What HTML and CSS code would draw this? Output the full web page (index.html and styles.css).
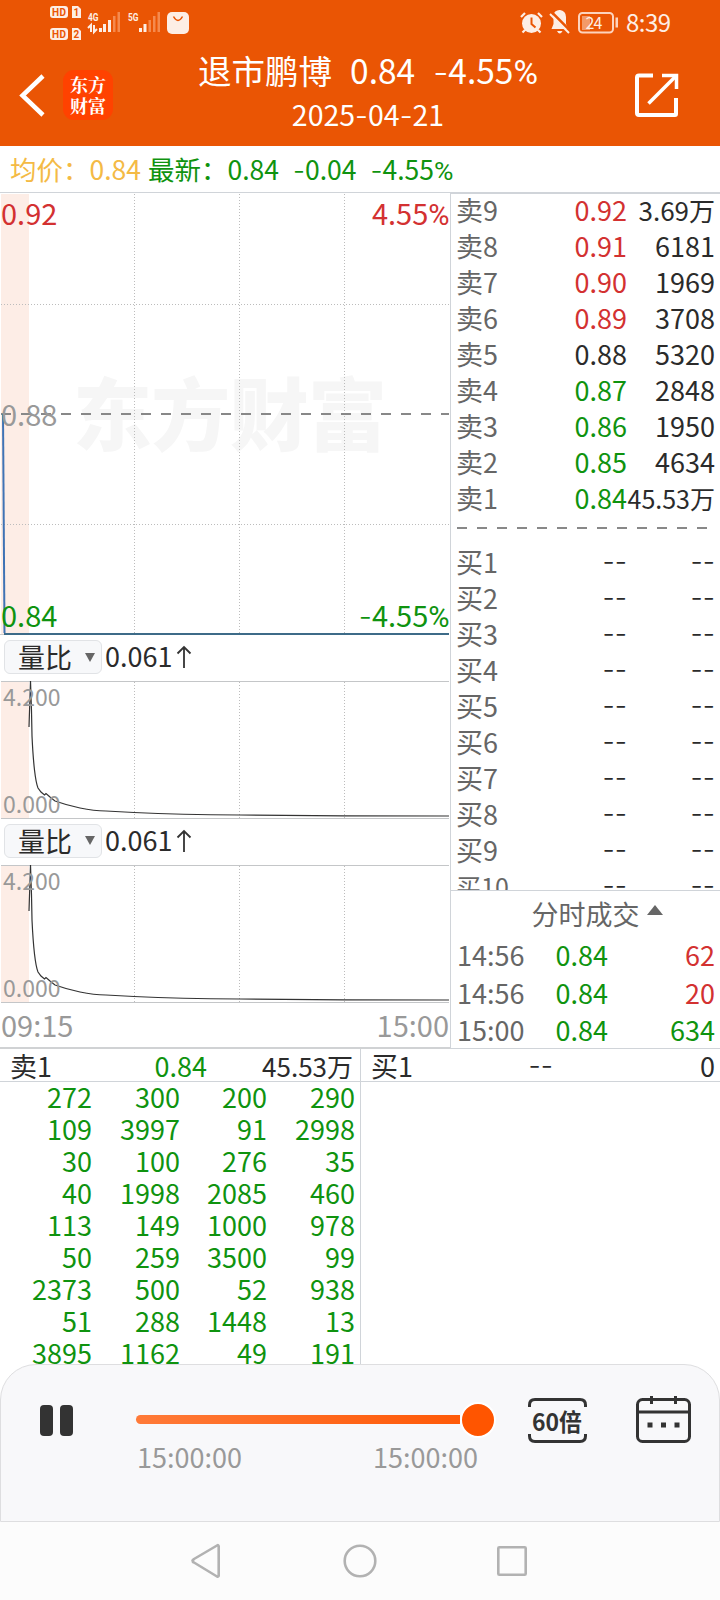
FILE: index.html
```
<!DOCTYPE html>
<html lang="zh-CN">
<head>
    <meta charset="UTF-8">
    <meta name="viewport" content="width=device-width, initial-scale=1.0">
    <title>退市鹏博 分时回放</title>
    <link rel="stylesheet" href="styles.css">
</head>
<body>

<header class="header">
    <div class="status">
        <svg class="status-left" width="150" height="44" viewBox="46 0 150 44">
            <g fill="#fdeee5">
                <rect x="50" y="6" width="18" height="12" rx="3"/>
                <path d="M72 6h6l3 3v9h-9z"/>
                <rect x="50" y="28" width="18" height="12" rx="3"/>
                <path d="M72 28h6l3 3v9h-9z"/>
                <rect x="99" y="28" width="3" height="4"/>
                <rect x="103" y="24" width="3" height="8"/>
                <rect x="108" y="20" width="3" height="12"/>
                <rect x="139" y="28" width="3" height="4"/>
                <rect x="143.500" y="24" width="3" height="8"/>
                <rect x="167" y="12" width="22" height="22" rx="5"/>
            </g>
            <g fill="#f58a4e">
                <rect x="113" y="16" width="2.500" height="16"/>
                <rect x="117.500" y="12" width="2.500" height="20"/>
                <rect x="148.500" y="20" width="2.500" height="12"/>
                <rect x="153" y="16" width="2.500" height="16"/>
                <rect x="157.500" y="12" width="2.500" height="20"/>
            </g>
            <path d="M88 28l3-3v7M94 25v7l3-3" fill="none" stroke="#fdeee5" stroke-width="2"/>
            <path d="M173.500 16.500q4.500 8 9 0" fill="none" stroke="#ea5504" stroke-width="1.500"/>
            <g class="hd" fill="#ea5504">
                <text x="52" y="16" textLength="14">HD</text>
                <text x="73.500" y="16">1</text>
                <text x="52" y="38" textLength="14">HD</text>
                <text x="73.500" y="38">2</text>
            </g>
            <g class="net" fill="#fdeee5">
                <text x="88" y="20.500" textLength="10.500" lengthAdjust="spacingAndGlyphs">4G</text>
                <text x="128" y="20.500" textLength="10.500" lengthAdjust="spacingAndGlyphs">5G</text>
            </g>
        </svg>
        <svg class="status-right" width="160" height="44" viewBox="516 0 160 44">
            <g fill="#fdeee5">
                <circle cx="531.500" cy="23.500" r="9.500"/>
                <path d="M521 17l4-4M538 13l4 4M525 30l-2.500 2.500M538 30l2.500 2.500" stroke="#fdeee5" stroke-width="2.200"/>
                <path d="M553 16a6.500 6.500 0 0 1 13 1v7l2.500 5h-17l2-5v-7z"/>
                <rect x="557" y="12.500" width="5" height="4" rx="2"/>
                <path d="M557 31h5.500q-2.700 5-5.500 0z"/>
            </g>
            <path d="M531.500 17.500v6.500l4 3.500" fill="none" stroke="#ea5504" stroke-width="2"/>
            <path d="M551.500 12l18 18" stroke="#ea5504" stroke-width="2.500"/>
            <path d="M550 14l19 19" stroke="#fdeee5" stroke-width="2"/>
            <rect x="579" y="13" width="34" height="19.500" rx="3.500" fill="none" stroke="#fdd3bd" stroke-width="2"/>
            <rect x="582" y="16" width="8" height="14" fill="#f39a69"/>
            <rect x="615.500" y="17.500" width="2.500" height="10" fill="#fdd3bd"/>
            <text class="battery" x="585.500" y="29" fill="#fdeee5" textLength="17">24</text>
            <text class="clock" x="626" y="32" fill="#fdeee5" textLength="45">8:39</text>
        </svg>
    </div>
    <div class="title-bar">
        <svg class="back" width="30" height="44" viewBox="0 0 30 44">
            <path d="M25 3L4.500 22.500L25 42" fill="none" stroke="#fff" stroke-width="4.500"/>
        </svg>
        <div class="logo"><span>东方</span><span>财富</span></div>
        <div class="title">
            <div class="name">退市鹏博<span class="gap"></span>0.84<span class="gap"></span><span class="dash">-</span>4.55<span class="pct">%</span></div>
            <div class="date">2025<span class="dash">-</span>04<span class="dash">-</span>21</div>
        </div>
        <svg class="share" width="46" height="46" viewBox="0 0 46 46">
            <path d="M19 3.500H5q-2 0-2 2V41q0 2 2 2H41q1 0 1-1V26" fill="none" stroke="#fff" stroke-width="4"/>
            <path d="M28 3.500H42.500V17" fill="none" stroke="#fff" stroke-width="3.500"/>
            <path d="M14.500 31.500L41 5" stroke="#fff" stroke-width="3.500"/>
        </svg>
    </div>
</header>

<div class="quote">
    <span class="avg">均价：<b>0.84</b></span>
    <span class="last">最新：<b>0.84</b><b><span class="dash">-</span>0.04</b><b><span class="dash">-</span>4.55<span class="pct">%</span></b></span>
</div>

<main class="main">
    <section class="left">
        <svg class="chart" width="450" height="443" viewBox="0 193 450 443">
            <rect x="1" y="194" width="28" height="440" fill="#fdede6"/>
            <text class="watermark" x="73" y="445" textLength="314">东方财富</text>
            <g class="grid">
                <path d="M134.500 194V634M239.500 194V634M344.500 194V634"/>
                <path d="M1 304.500H449M1 524.500H449"/>
            </g>
            <path d="M1 414H449" stroke="#888" stroke-width="2" stroke-dasharray="10 10"/>
            <path d="M0 634.500H449" stroke="#ccc"/>
            <path d="M3 414L4.500 633" fill="none" stroke="#3f73b5" stroke-width="2"/>
            <path d="M4 634H449" stroke="#3d6b88" stroke-width="2"/>
            <g class="axis">
                <text class="red" x="1" y="225">0.92</text>
                <text class="red" x="449.500" y="225" text-anchor="end">4.55<tspan class="pct">%</tspan></text>
                <text class="grey" x="1" y="426">0.88</text>
                <text class="green" x="1" y="627">0.84</text>
                <text class="green" x="449.500" y="627" text-anchor="end"><tspan class="dash">-</tspan>4.55<tspan class="pct">%</tspan></text>
            </g>
        </svg>

        <div class="indicator">
            <span class="select">量比<i class="down"></i></span>
            <span class="value">0.061</span>
            <svg width="16" height="24" viewBox="0 0 16 24"><path d="M8 23V1.500M1.500 8.500L8 2L14.500 8.500" fill="none" stroke="#333" stroke-width="1.800"/></svg>
        </div>
        <svg class="volume" width="450" height="138" viewBox="0 0 450 138">
            <g id="ratio">
                <rect x="1" y="0" width="28" height="137" fill="#fdede6"/>
                <path class="grid" d="M134.500 1V137M239.500 1V137M344.500 1V137"/>
                <path d="M1 .5H449M1 137.500H449" stroke="#c4c6c8"/>
                <path class="curve" d="M29 46L30.500 0L31.500 30L32 55Q33 76 34.500 89T38 107L41 111L44.500 114L46 112.500L50 116L55 120Q66 124 80 127T106 130L134 131.500Q180 133.500 240 134T344 134.800L449 135"/>
                <g class="scale">
                    <text x="3" y="25">4.200</text>
                    <text x="3" y="132">0.000</text>
                </g>
            </g>
        </svg>

        <div class="indicator">
            <span class="select">量比<i class="down"></i></span>
            <span class="value">0.061</span>
            <svg width="16" height="24" viewBox="0 0 16 24"><path d="M8 23V1.500M1.500 8.500L8 2L14.500 8.500" fill="none" stroke="#333" stroke-width="1.800"/></svg>
        </div>
        <svg class="volume" width="450" height="138" viewBox="0 0 450 138"><use href="#ratio"/></svg>

        <div class="times"><span>09:15</span><span>15:00</span></div>
    </section>

    <section class="right">
        <div class="book">
            <div class="row"><span>卖9</span><span class="red">0.92</span><span class="mid">3.69万</span></div>
            <div class="row"><span>卖8</span><span class="red">0.91</span><span>6181</span></div>
            <div class="row"><span>卖7</span><span class="red">0.90</span><span>1969</span></div>
            <div class="row"><span>卖6</span><span class="red">0.89</span><span>3708</span></div>
            <div class="row"><span>卖5</span><span>0.88</span><span>5320</span></div>
            <div class="row"><span>卖4</span><span class="green">0.87</span><span>2848</span></div>
            <div class="row"><span>卖3</span><span class="green">0.86</span><span>1950</span></div>
            <div class="row"><span>卖2</span><span class="green">0.85</span><span>4634</span></div>
            <div class="row"><span>卖1</span><span class="green">0.84</span><span class="small">45.53万</span></div>
            <svg class="split" width="269" height="28" viewBox="451 518 269 28"><path d="M457 528H708" stroke="#888" stroke-width="2" stroke-dasharray="10 10"/></svg>
            <div class="row"><span>买1</span><span class="dash">--</span><span class="dash">--</span></div>
            <div class="row"><span>买2</span><span class="dash">--</span><span class="dash">--</span></div>
            <div class="row"><span>买3</span><span class="dash">--</span><span class="dash">--</span></div>
            <div class="row"><span>买4</span><span class="dash">--</span><span class="dash">--</span></div>
            <div class="row"><span>买5</span><span class="dash">--</span><span class="dash">--</span></div>
            <div class="row"><span>买6</span><span class="dash">--</span><span class="dash">--</span></div>
            <div class="row"><span>买7</span><span class="dash">--</span><span class="dash">--</span></div>
            <div class="row"><span>买8</span><span class="dash">--</span><span class="dash">--</span></div>
            <div class="row"><span>买9</span><span class="dash">--</span><span class="dash">--</span></div>
            <div class="row"><span class="small">买10</span><span class="dash">--</span><span class="dash">--</span></div>
        </div>
        <div class="deals">
            <div class="deals-title">分时成交<i class="up"></i></div>
            <div class="deal"><span>14:56</span><span class="green">0.84</span><span class="red">62</span></div>
            <div class="deal"><span>14:56</span><span class="green">0.84</span><span class="red">20</span></div>
            <div class="deal"><span>15:00</span><span class="green">0.84</span><span class="green">634</span></div>
        </div>
    </section>
</main>

<section class="queue">
    <div class="sell">
        <div class="queue-head"><span>卖1</span><span class="green">0.84</span><span class="mid">45.53万</span></div>
        <div class="orders">
            <span>272</span><span>300</span><span>200</span><span>290</span>
            <span>109</span><span>3997</span><span>91</span><span>2998</span>
            <span>30</span><span>100</span><span>276</span><span>35</span>
            <span>40</span><span>1998</span><span>2085</span><span>460</span>
            <span>113</span><span>149</span><span>1000</span><span>978</span>
            <span>50</span><span>259</span><span>3500</span><span>99</span>
            <span>2373</span><span>500</span><span>52</span><span>938</span>
            <span>51</span><span>288</span><span>1448</span><span>13</span>
            <span>3895</span><span>1162</span><span>49</span><span>191</span>
        </div>
    </div>
    <div class="buy">
        <div class="queue-head"><span>买1</span><span class="dash">--</span><span>0</span></div>
    </div>
</section>

<section class="player">
    <div class="pause"><i></i><i></i></div>
    <div class="progress">
        <div class="track"><i class="bar"></i><i class="thumb"></i></div>
        <div class="range"><span>15:00:00</span><span>15:00:00</span></div>
    </div>
    <svg class="speed" width="60" height="48" viewBox="528 1396 60 48">
        <path d="M529.500 1407v-2q0-5.500 5.500-5.500h45q5.500 0 5.500 5.500v2M529.500 1434v2q0 5.500 5.500 5.500h45q5.500 0 5.500-5.500v-2" fill="none" stroke="#333" stroke-width="3"/>
        <text x="532" y="1431" textLength="50" lengthAdjust="spacingAndGlyphs">60倍</text>
    </svg>
    <svg class="calendar" width="56" height="50" viewBox="636 1394 56 50">
        <rect x="637.500" y="1399.500" width="52" height="42" rx="5" fill="none" stroke="#333" stroke-width="3"/>
        <path d="M638 1412H690M651.500 1396v8M675.500 1396v8" stroke="#333" stroke-width="3"/>
        <path d="M647.500 1425h5M661 1425h5M674.500 1425h5" stroke="#333" stroke-width="5"/>
    </svg>
</section>

<nav class="nav">
    <svg width="720" height="78" viewBox="0 1522 720 78" fill="none" stroke="#b2b2b2" stroke-width="2.600" stroke-linejoin="round">
        <path d="M192.500 1560.500Q192.500 1562 194 1562.500L217 1576.500Q218.700 1577 218.700 1575.500V1546.500Q218.700 1544.500 217 1545.500L194 1559Z"/>
        <circle cx="360" cy="1561" r="15.300"/>
        <rect x="498.300" y="1547.300" width="27.400" height="27.400" rx="1"/>
    </svg>
</nav>

</body>
</html>
```
FILE: styles.css
```
* {
    box-sizing: border-box;
}

body {
    margin: 0;
    width: 720px;
    height: 1600px;
    overflow: hidden;
    background: #fff;
    color: #2b2b2b;
    font-family: "Noto Sans CJK SC", sans-serif;
    font-size: 27px;
}

svg {
    display: block;
}

i {
    display: block;
}

b {
    font-weight: normal;
}

.red {
    color: #d33131;
    fill: #d33131;
}

.green {
    color: #0f930f;
    fill: #0f930f;
}

.grey {
    fill: #999;
}

.dash {
    font-family: Inter, sans-serif;
    font-weight: 300;
}

.pct {
    font-family: Roboto, sans-serif;
}

/* header */
.header {
    height: 146px;
    background: #ea5504;
    color: #fff;
}

.status {
    display: flex;
    justify-content: space-between;
    height: 44px;
    padding: 0 44px 0 46px;
}

.hd {
    font: bold 10px Roboto, sans-serif;
}

.net {
    font: bold 11.500px Roboto, sans-serif;
}

.battery {
    font-size: 16px;
}

.clock {
    font-size: 24px;
}

.title-bar {
    display: flex;
    height: 102px;
    padding-left: 18px;
}

.back {
    margin-top: 29px;
}

.logo {
    width: 50px;
    height: 50px;
    margin: 26px 0 0 15px;
    padding: 4px 0;
    border-radius: 11px;
    background: #ff4200;
    font: bold 18px/21px "Noto Serif CJK SC", "Noto Sans CJK SC", sans-serif;
    text-align: center;
}

.logo span {
    display: block;
}

.title {
    width: 510px;
    text-align: center;
}

.name {
    height: 49px;
    font-size: 33.500px;
    line-height: 51px;
}

.gap {
    display: inline-block;
    width: 18px;
}

.date {
    font-size: 28.500px;
    line-height: 41px;
}

.share {
    margin-top: 28px;
    margin-left: 11px;
}

/* quote line */
.quote {
    display: flex;
    gap: 7px;
    height: 47px;
    padding-left: 10px;
    border-bottom: 1px solid #d0d4d9;
    font-size: 26.500px;
    line-height: 45px;
}

.quote b {
    margin-right: 14px;
}

.avg {
    color: #f4ba45;
}

.quote .avg b {
    margin-right: 0;
}

.last {
    color: #0f930f;
}

/* charts */
.main {
    display: flex;
    height: 855px;
}

.left {
    width: 450px;
}

.grid {
    fill: none;
    stroke: #bcbcbc;
    stroke-dasharray: 1 2;
}

.watermark {
    fill: #f6f6f6;
    font-size: 79px;
    font-weight: 900;
}

.axis {
    font-size: 29px;
}

.curve {
    fill: none;
    stroke: #333;
    stroke-width: 1.200px;
}

.scale {
    fill: #999;
    font-size: 23px;
}

.indicator {
    display: flex;
    align-items: center;
    height: 45px;
    padding: 0 0 3px 4px;
    line-height: 34px;
}

.volume + .indicator {
    height: 46px;
}

.select {
    display: flex;
    align-items: center;
    justify-content: space-between;
    width: 98px;
    height: 34px;
    padding: 0 6px 0 13px;
    border: 1px solid #e1e3e6;
    border-radius: 6px;
    background: #f7f8fa;
    line-height: 30px;
}

.down {
    border: 5.500px solid transparent;
    border-top: 9px solid #666;
    border-bottom: 0;
}

.value {
    margin: 0 4px 2px 3px;
}

.times {
    display: flex;
    justify-content: space-between;
    height: 46px;
    padding-right: 1px;
    padding-left: 1px;
    border-bottom: 2px solid #d0d2d4;
    color: #999;
    font-size: 29px;
    line-height: 43px;
}

/* order book */
.right {
    width: 270px;
    border-top: 1px solid #d0d4d9;
    border-left: 1px solid #d0d4d9;
}

.book {
    height: 696px;
    overflow: hidden;
}

.row {
    display: grid;
    grid-template-columns: 80px 91px 88px;
    height: 36px;
    padding-left: 5px;
    line-height: 32px;
    text-align: right;
}

.row span:first-child,
.deal span:first-child {
    color: #666;
    text-align: left;
}

.row .mid,
.queue-head .mid {
    font-size: 26px;
}

.row .small {
    font-size: 25px;
}

.deals {
    height: 158px;
    border-top: 1px solid #d0d4d9;
}

.deals-title {
    display: flex;
    justify-content: center;
    gap: 7px;
    height: 46px;
    padding-left: 23px;
    color: #666;
    line-height: 45px;
}

.up {
    height: 10px;
    margin-top: 14px;
    border: 8px solid transparent;
    border-top: 0;
    border-bottom: 10px solid #666;
}

.deal {
    display: grid;
    grid-template-columns: 70px 81px 107px;
    height: 37.500px;
    padding-left: 6px;
    line-height: 35px;
    text-align: right;
}

/* order queue */
.queue {
    display: flex;
    height: 316px;
    border-top: 1px solid #d0d4d9;
}

.sell {
    width: 361px;
    border-right: 1px solid #d0d4d9;
}

.buy {
    flex: 1;
}

.queue-head {
    display: grid;
    grid-template-columns: 80px 117px 1fr;
    height: 33px;
    padding: 0 7px 0 10px;
    border-bottom: 1px solid #d0d4d9;
    line-height: 33px;
    text-align: right;
}

.buy .queue-head {
    grid-template-columns: 80px 102px 1fr;
    padding-right: 5px;
}

.queue-head span:first-child {
    text-align: left;
}

.orders {
    display: grid;
    grid-template-columns: 92px 88px 87px 88px;
    grid-auto-rows: 32px;
    color: #0f930f;
    line-height: 30px;
    text-align: right;
}

/* playback panel */
.player {
    position: relative;
    display: flex;
    height: 158px;
    padding: 30px 27px 0 39px;
    border: 1px solid #dedee0;
    border-radius: 36px 36px 0 0;
    background: #f8f8fa;
}

.pause {
    display: flex;
    gap: 7px;
    padding-top: 10px;
}

.pause i {
    width: 13px;
    height: 31px;
    border-radius: 4px;
    background: #333;
}

.progress {
    width: 360px;
    margin-left: 63px;
}

.track {
    display: flex;
    align-items: center;
    height: 50px;
}

.bar {
    width: 324px;
    height: 9px;
    margin-bottom: 1px;
    border-radius: 5px 0 0 5px;
    background: linear-gradient(90deg, #ff7a38, #ff5a08);
}

.thumb {
    width: 36px;
    height: 36px;
    border: 2px solid #fff;
    border-radius: 50%;
    background: #ff5500;
}

.range {
    display: flex;
    justify-content: space-between;
    padding: 0 18px 0 1px;
    color: #999;
    line-height: 24px;
}

.speed {
    margin-left: 32px;
    margin-top: 1px;
    font-size: 24px;
    font-weight: bold;
    fill: #333;
}

.calendar {
    margin-left: 48px;
    margin-top: -1px;
}

.nav {
    height: 78px;
    background: #fcfcfc;
}
```
